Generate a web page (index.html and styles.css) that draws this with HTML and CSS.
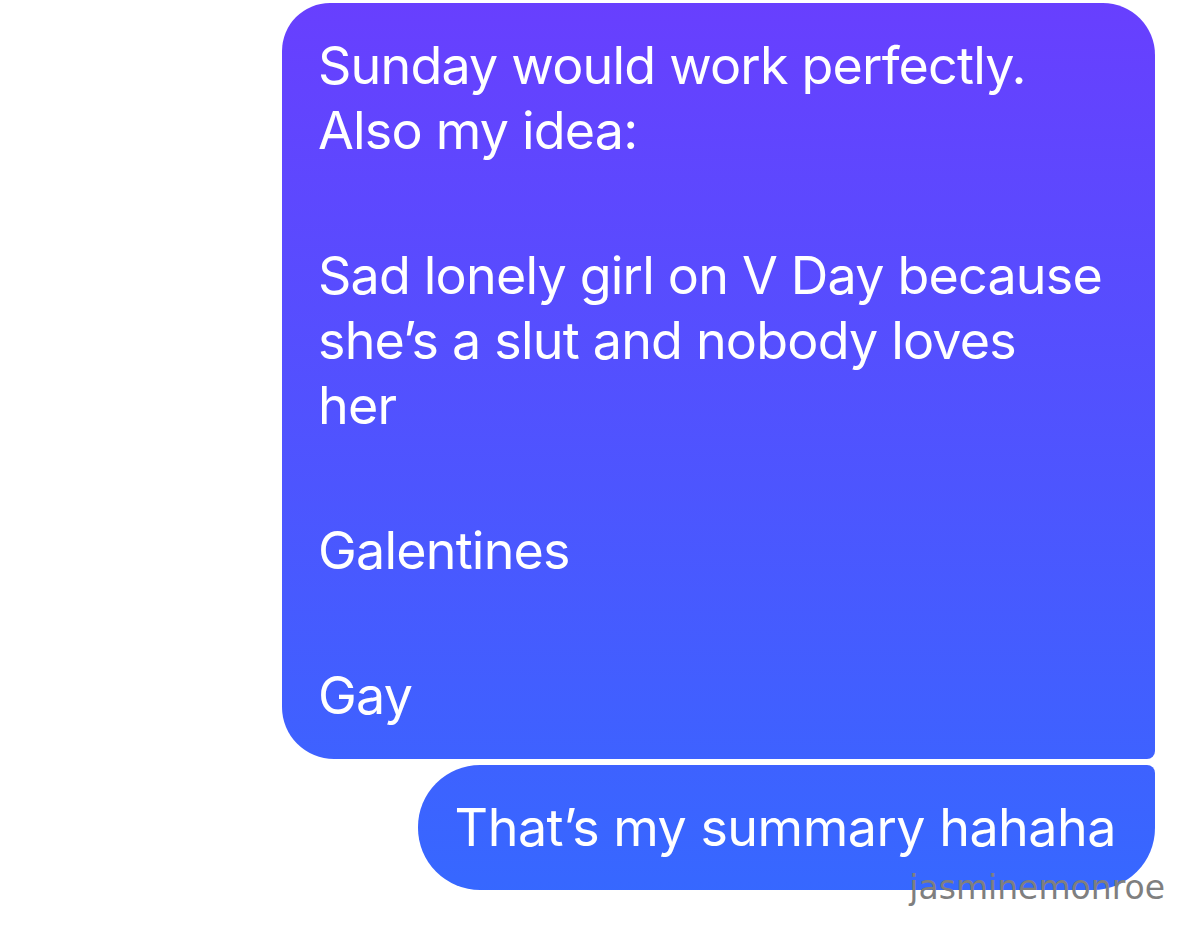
FILE: index.html
```html
<!DOCTYPE html>
<html lang="en">
<head>
<meta charset="utf-8">
<title>Messages</title>
<link rel="stylesheet" href="styles.css">
</head>
<body>
<main class="thread">
  <div class="bubble bubble-first">
    <p class="para">Sunday would work perfectly.<br>Also my idea:</p>
    <p class="para">Sad lonely girl on V Day because<br>she’s a slut and nobody loves<br>her</p>
    <p class="para">Galentines</p>
    <p class="para">Gay</p>
  </div>
  <div class="bubble bubble-last">
    <p class="para">That’s my summary hahaha</p>
  </div>
  <div class="watermark">jasminemonroe</div>
</main>
</body>
</html>
```

FILE: styles.css
```css
html, body {
  margin: 0;
  padding: 0;
  background: #ffffff;
}

.thread {
  position: relative;
  width: 1179px;
  height: 925px;
  box-sizing: border-box;
  padding: 3px 24px 0 0;
  display: flex;
  flex-direction: column;
  align-items: flex-end;
  gap: 6px;
  overflow: hidden;
}

.bubble {
  box-sizing: border-box;
  color: #ffffff;
  font-family: Inter, "Noto Sans", sans-serif;
  font-size: 52px;
  line-height: 65px;
  letter-spacing: -0.8px;
  background-image: linear-gradient(to bottom, #683ffe 0px, #3668ff 900px, #3469ff 925px);
  background-attachment: fixed;
  white-space: nowrap;
}

.para {
  margin: 0;
}

.para + .para {
  margin-top: 80px;
}

.bubble-first {
  width: 873px;
  padding: 30px 38px 31px 36px;
  border-radius: 48px 52px 8px 52px;
}

.bubble-last {
  height: 125px;
  padding: 30px 39px 30px 37px;
  letter-spacing: -0.5px;
  border-radius: 62px 8px 62px 62px;
}

.watermark {
  position: absolute;
  right: 14px;
  top: 868px;
  font-family: "DejaVu Sans", sans-serif;
  font-size: 33px;
  line-height: 40px;
  color: #7f7f7f;
}
```
